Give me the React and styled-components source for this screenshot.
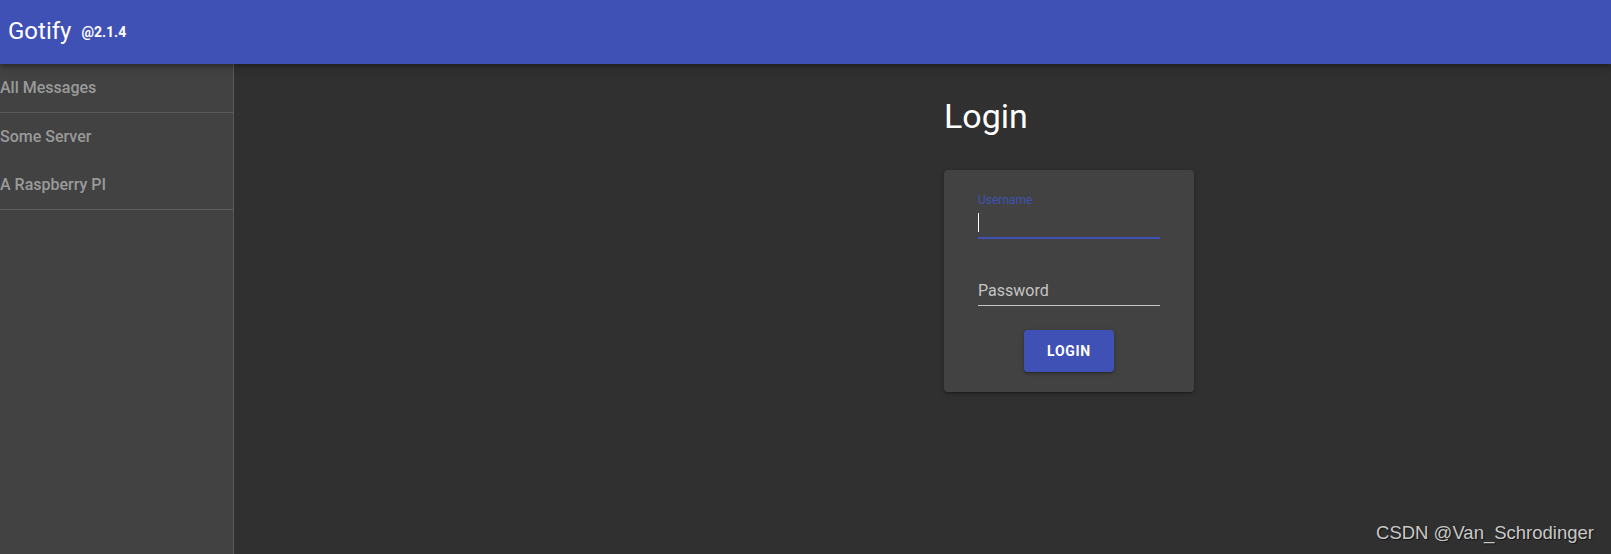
import React from "react";
import styled, { createGlobalStyle } from "styled-components";

const GlobalStyle = createGlobalStyle`
  html, body {
    margin: 0;
    padding: 0;
    background: #303030;
    font-family: Roboto, "Liberation Sans", Arial, sans-serif;
  }
`;

const Page = styled.div`
  height: 554px;
  display: flex;
  flex-direction: column;
  position: relative;
  overflow: hidden;
`;

const AppBar = styled.header`
  height: 64px;
  flex-shrink: 0;
  background: #3f51b5;
  display: flex;
  align-items: center;
  padding-left: 8px;
  color: #fff;
  position: relative;
  z-index: 2;
  box-shadow: 0 2px 4px -1px rgba(0, 0, 0, 0.2), 0 4px 5px 0 rgba(0, 0, 0, 0.14),
    0 1px 10px 0 rgba(0, 0, 0, 0.12);
`;

const Brand = styled.div`
  font-size: 24px;
  line-height: 32px;
  font-weight: 400;
`;

const Version = styled.span`
  font-size: 14px;
  font-weight: 700;
  margin-left: 10px;
  position: relative;
  top: -2px;
`;

const Body = styled.div`
  flex: 1;
  display: flex;
`;

const Sidebar = styled.nav`
  width: 233px;
  flex-shrink: 0;
  background: #424242;
  border-right: 1px solid rgba(255, 255, 255, 0.12);
`;

const NavItem = styled.div`
  height: 48px;
  display: flex;
  align-items: center;
  font-size: 16px;
  font-weight: 500;
  color: rgba(255, 255, 255, 0.48);
  padding-bottom: 1px;
  box-sizing: border-box;
`;

const Divider = styled.hr`
  margin: 0;
  border: none;
  height: 1px;
  background: rgba(255, 255, 255, 0.12);
`;

const Main = styled.main`
  flex: 1;
  padding: 32px 0 0 710px;
`;

const Heading = styled.h1`
  margin: 0;
  font-size: 34px;
  line-height: 40px;
  font-weight: 400;
  color: #fff;
`;

const Card = styled.form`
  margin-top: 34px;
  width: 250px;
  box-sizing: border-box;
  padding: 23px 34px 20px;
  background: #424242;
  border-radius: 4px;
  display: flex;
  flex-direction: column;
  box-shadow: 0 1px 5px 0 rgba(0, 0, 0, 0.2), 0 2px 2px 0 rgba(0, 0, 0, 0.14),
    0 3px 1px -2px rgba(0, 0, 0, 0.12);
`;

const Field = styled.div`
  display: flex;
  flex-direction: column;
  margin-top: ${(p) => (p.$first ? "0" : "22px")};
  padding-top: ${(p) => (p.$focused ? "0" : "14px")};
`;

const FloatLabel = styled.div`
  font-size: 12px;
  line-height: 14px;
  color: #3f51b5;
`;

const InputBox = styled.div`
  box-sizing: border-box;
  padding: 6px 0 5px;
  display: flex;
  align-items: center;
  font-size: 16px;
  line-height: 19px;
  color: rgba(255, 255, 255, 0.7);
  border-bottom: ${(p) =>
    p.$focused ? "2px solid #3f51b5" : "1px solid rgba(255, 255, 255, 0.7)"};
  height: ${(p) => (p.$focused ? "32px" : "31px")};
`;

const Caret = styled.span`
  width: 1px;
  height: 19px;
  background: #fff;
`;

const Button = styled.button`
  margin-top: 24px;
  align-self: center;
  width: 90px;
  height: 42px;
  border: none;
  border-radius: 4px;
  background: #3f51b5;
  color: #fff;
  font-family: Roboto, "Liberation Sans", Arial, sans-serif;
  font-size: 14px;
  font-weight: 700;
  letter-spacing: 0.7px;
  box-shadow: 0 1px 5px 0 rgba(0, 0, 0, 0.2), 0 2px 2px 0 rgba(0, 0, 0, 0.14),
    0 3px 1px -2px rgba(0, 0, 0, 0.12);
`;

const Watermark = styled.div`
  position: absolute;
  right: 17px;
  bottom: 10px;
  font-family: "Liberation Sans", Arial, sans-serif;
  font-size: 18.5px;
  color: #c8c8c8;
  text-shadow: 1px 1px 1px rgba(0, 0, 0, 0.6);
`;

const App = () => {
  return (
    <Page>
      <GlobalStyle />
      <AppBar>
        <Brand>
          Gotify<Version>@2.1.4</Version>
        </Brand>
      </AppBar>
      <Body>
        <Sidebar>
          <NavItem>All Messages</NavItem>
          <Divider />
          <NavItem>Some Server</NavItem>
          <NavItem>A Raspberry PI</NavItem>
          <Divider />
        </Sidebar>
        <Main>
          <Heading>Login</Heading>
          <Card onSubmit={(e) => e.preventDefault()}>
            <Field $first $focused>
              <FloatLabel>Username</FloatLabel>
              <InputBox $focused>
                <Caret />
              </InputBox>
            </Field>
            <Field>
              <InputBox>Password</InputBox>
            </Field>
            <Button type="submit">LOGIN</Button>
          </Card>
        </Main>
      </Body>
      <Watermark>CSDN @Van_Schrodinger</Watermark>
    </Page>
  );
};

export default App;
